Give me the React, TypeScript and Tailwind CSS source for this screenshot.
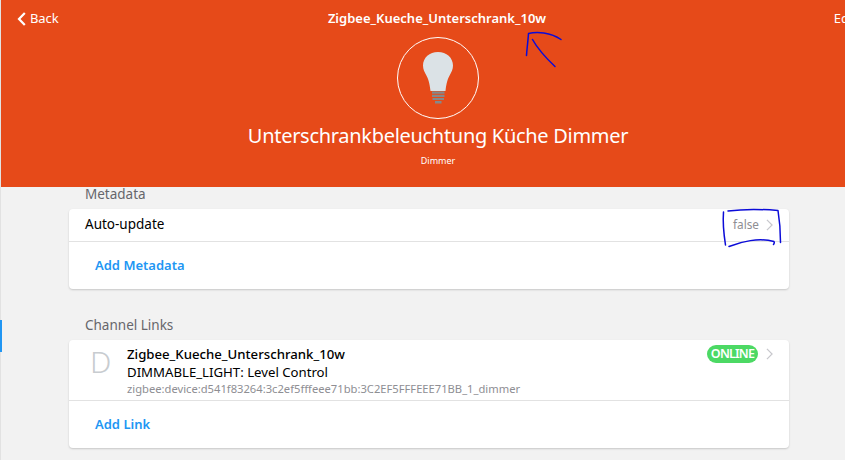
import React from 'react';

const font = { fontFamily: '"Noto Sans", sans-serif' };

const Chevron = ({ className }: { className: string }) => (
  <svg viewBox="0 0 8 14" className={className} fill="none" stroke="currentColor" strokeWidth="1.4">
    <path d="M1 1l6 6-6 6" />
  </svg>
);

const Bulb = () => (
  <svg viewBox="0 0 32 52" className="w-[32px] h-[52px]">
    <path
      d="M16 0C7.500 0 1 5.800 1 13.500c0 4 1.600 6.600 3.400 10 1.700 3.300 3.200 7 4.100 15.500h15c.9-8.500 2.400-12.200 4.100-15.500 1.800-3.400 3.400-6 3.400-10C31 5.800 24.500 0 16 0z"
      fill="#dbe2e6"
    />
    <path d="M10 39.500h12.500v2.200H10zM10 42.700h12.500v2.200H10zM10.500 45.900h11.500v2.200H10.500zM13 49h6.500v2.500H13z" fill="#86888a" />
  </svg>
);

export default function App() {
  return (
    <div className="relative w-[845px] h-[460px] overflow-hidden bg-[#f2f2f2] flex" style={font}>
      <div className="w-px shrink-0 bg-[#e2e2e2] flex flex-col pt-[320px]">
        <div className="w-[2px] h-[32px] bg-[#2196f3]" />
      </div>

      <div className="w-[874px] shrink-0 flex flex-col">
        <header className="h-[187px] bg-[#e64a19] text-white flex flex-col items-center">
          <div className="w-full h-[37px] flex items-center justify-between pl-[16px] pr-[18px]">
            <div className="flex items-center gap-[4px] w-[60px]">
              <svg viewBox="0 0 9 14" className="w-[9px] h-[14px]" fill="none" stroke="currentColor" strokeWidth="2.200">
                <path d="M7.800 1L2 7l5.800 6" />
              </svg>
              <span className="text-[13px] tracking-[-0.1px]">Back</span>
            </div>
            <span className="text-[13px] font-semibold">Zigbee_Kueche_Unterschrank_10w</span>
            <span className="text-[13px] w-[60px] text-right">Edit</span>
          </div>
          <div className="w-[82px] h-[82px] rounded-full border border-white flex items-center justify-center">
            <Bulb />
          </div>
          <h1 className="text-[20px] leading-[28px] mt-[3px] tracking-[-0.3px]">Unterschrankbeleuchtung Küche Dimmer</h1>
          <p className="text-[9px] leading-[12px] mt-[5px]">Dimmer</p>
        </header>

        <main className="w-[720px] ml-[68px] flex flex-col">
          <h2 className="text-[13.500px] leading-[15px] mb-[7px] pl-[16px] text-[#66666b]">Metadata</h2>
          <section className="bg-white rounded-[4px] shadow-[0_1px_2px_rgba(0,0,0,0.18)]">
            <div className="h-[33px] pb-[1px] pl-[16px] pr-[16px] flex items-center justify-between border-b border-[#e2e2e2]">
              <span className="text-[13.500px] text-black">Auto-update</span>
              <span className="flex items-center gap-[7px] text-[11.800px] text-[#8e8e93]">
                false
                <Chevron className="w-[7px] h-[12px] text-[#c7c7cc]" />
              </span>
            </div>
            <div className="h-[47px] pl-[26px] flex items-center text-[13px] font-semibold text-[#2196f3]">Add Metadata</div>
          </section>

          <h2 className="text-[13.500px] leading-[15px] mb-[7px] pl-[16px] mt-[29px] text-[#66666b]">Channel Links</h2>
          <section className="bg-white rounded-[4px] shadow-[0_1px_2px_rgba(0,0,0,0.18)]">
            <div className="h-[61px] flex border-b border-[#e2e2e2]">
              <div className="w-[58px] pl-[21px] pt-[2px] text-[30px] leading-[40px] font-light text-[#c8ccd0]">D</div>
              <div className="flex-1 pt-[5px]">
                <div className="text-[13.200px] leading-[18px] font-medium text-black">Zigbee_Kueche_Unterschrank_10w</div>
                <div className="text-[13.200px] leading-[18px] text-black">DIMMABLE_LIGHT: Level Control</div>
                <div className="text-[11.200px] leading-[15px] text-[#8e8e93]">zigbee:device:d541f83264:3c2ef5fffeee71bb:3C2EF5FFFEEE71BB_1_dimmer</div>
              </div>
              <div className="flex items-start gap-[8px] pt-[5px] pr-[16px]">
                <span className="h-[18px] w-[51px] rounded-full bg-[#4cd964] text-white text-[12.500px] leading-[18px] font-semibold text-center tracking-[-0.8px]">ONLINE</span>
                <Chevron className="w-[7px] h-[12px] mt-[3px] text-[#c7c7cc]" />
              </div>
            </div>
            <div className="h-[47px] pl-[26px] flex items-center text-[13px] font-semibold text-[#2196f3]">Add Link</div>
          </section>
        </main>
      </div>

      {/* hand drawn marks on top of the screenshot */}
      <svg className="absolute inset-0 pointer-events-none" width="845" height="460" fill="none" stroke="#0b0bd8" strokeWidth="1.500" strokeLinecap="round" strokeLinejoin="round">
        <path d="M526.500 55.500C527 48 528 41 528.500 33.500c8-2 22-1.500 32.500 6" />
        <path d="M532.500 39.500c5 9 13 18 22.500 27" />
        <path d="M723.500 212c-.7 9-.5 17 2 33" />
        <path d="M728 211c15-2 32-2 50-.5 1.500 9 2.500 22 2.500 32" />
        <path d="M729 246.500c12-5 30-9 45-5 .5 1 .3 2-.5 3" />
      </svg>
    </div>
  );
}
